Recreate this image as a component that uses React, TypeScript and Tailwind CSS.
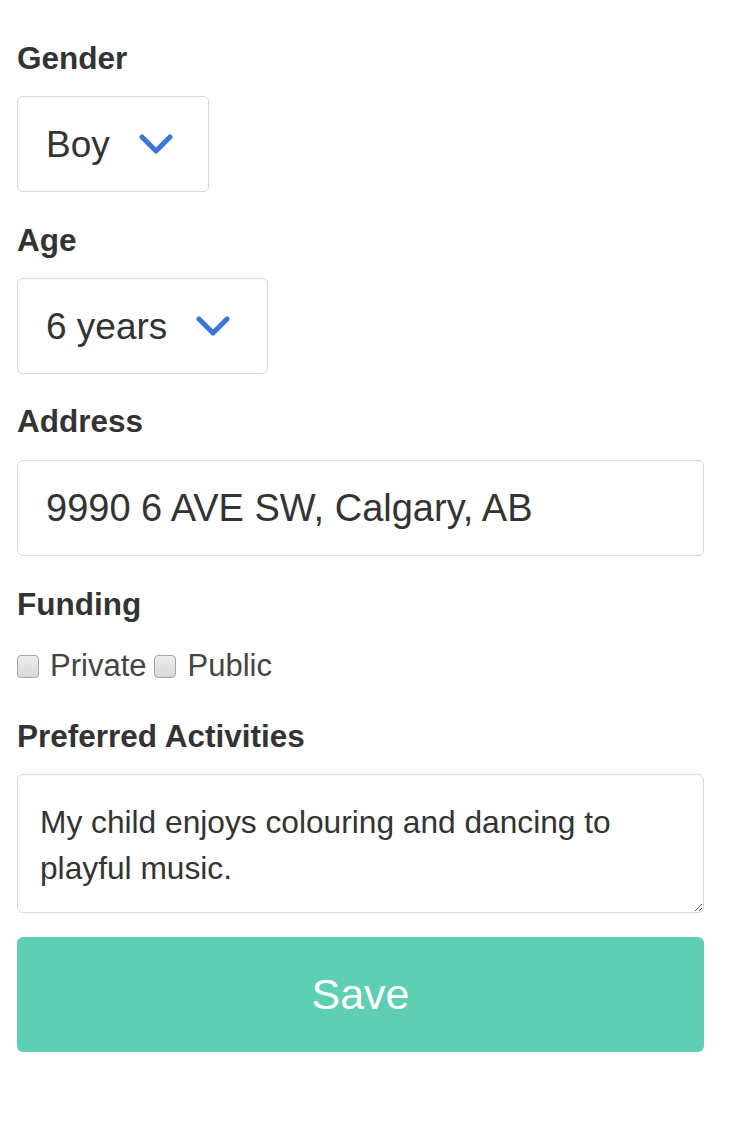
import { ReactNode } from "react";

function Chevron() {
  return (
    <svg width="34" height="20" viewBox="0 0 34 20" className="shrink-0">
      <polyline
        points="3,3 17,17 31,3"
        fill="none"
        stroke="#3a75dc"
        strokeWidth="5"
        strokeLinecap="round"
        strokeLinejoin="round"
      />
    </svg>
  );
}

function Label({ children, className }: { children: ReactNode; className?: string }) {
  return (
    <div className={`text-[31.5px] leading-[36px] font-bold text-[#333] ${className ?? ""}`}>
      {children}
    </div>
  );
}

function Select({ value, width }: { value: string; width: string }) {
  return (
    <div
      className={`${width} h-[96px] mt-[20px] flex items-center gap-[29px] pl-[28px] border border-[#d8d8d8] rounded-[6px] bg-white`}
    >
      <span className="text-[37px] text-[#333] leading-none">{value}</span>
      <Chevron />
    </div>
  );
}

function Check({ label }: { label: string }) {
  return (
    <label className="flex items-center gap-[11px] text-[31px] text-[#444]">
      <span className="w-[22px] h-[23px] rounded-[4px] border border-[#a5a5a5] bg-gradient-to-b from-[#ececec] to-[#d8d8d8]" />
      {label}
    </label>
  );
}

export default function App() {
  return (
    <div
      className="w-[731px] min-h-[1130px] bg-white pl-[17px] pr-[27px] pt-[40px]"
      style={{ fontFamily: '"Liberation Sans", Arial, sans-serif' }}
    >
      <Label>Gender</Label>
      <Select value="Boy" width="w-[192px]" />

      <Label className="mt-[30px]">Age</Label>
      <Select value="6 years" width="w-[251px]" />

      <Label className="mt-[29px]">Address</Label>
      <input
        readOnly
        defaultValue="9990 6 AVE SW, Calgary, AB"
        className="mt-[21px] w-full h-[96px] pl-[28px] border border-[#d8d8d8] rounded-[6px] text-[38px] text-[#333] outline-none"
      />

      <Label className="mt-[30px]">Funding</Label>
      <div className="mt-[24px] h-[40px] flex items-center gap-[8px]">
        <Check label="Private" />
        <Check label="Public" />
      </div>

      <Label className="mt-[32px]">Preferred Activities</Label>
      <textarea
        readOnly
        defaultValue="My child enjoys colouring and dancing to playful music."
        className="mt-[20px] block w-full h-[139px] pl-[22px] pr-[20px] pt-[24px] border border-[#d8d8d8] rounded-[6px] text-[31.7px] leading-[46px] text-[#333] outline-none"
      />

      <button className="mt-[24px] w-full h-[115px] rounded-[6px] bg-[#5ecfb3] text-white text-[43px]">
        Save
      </button>
    </div>
  );
}
